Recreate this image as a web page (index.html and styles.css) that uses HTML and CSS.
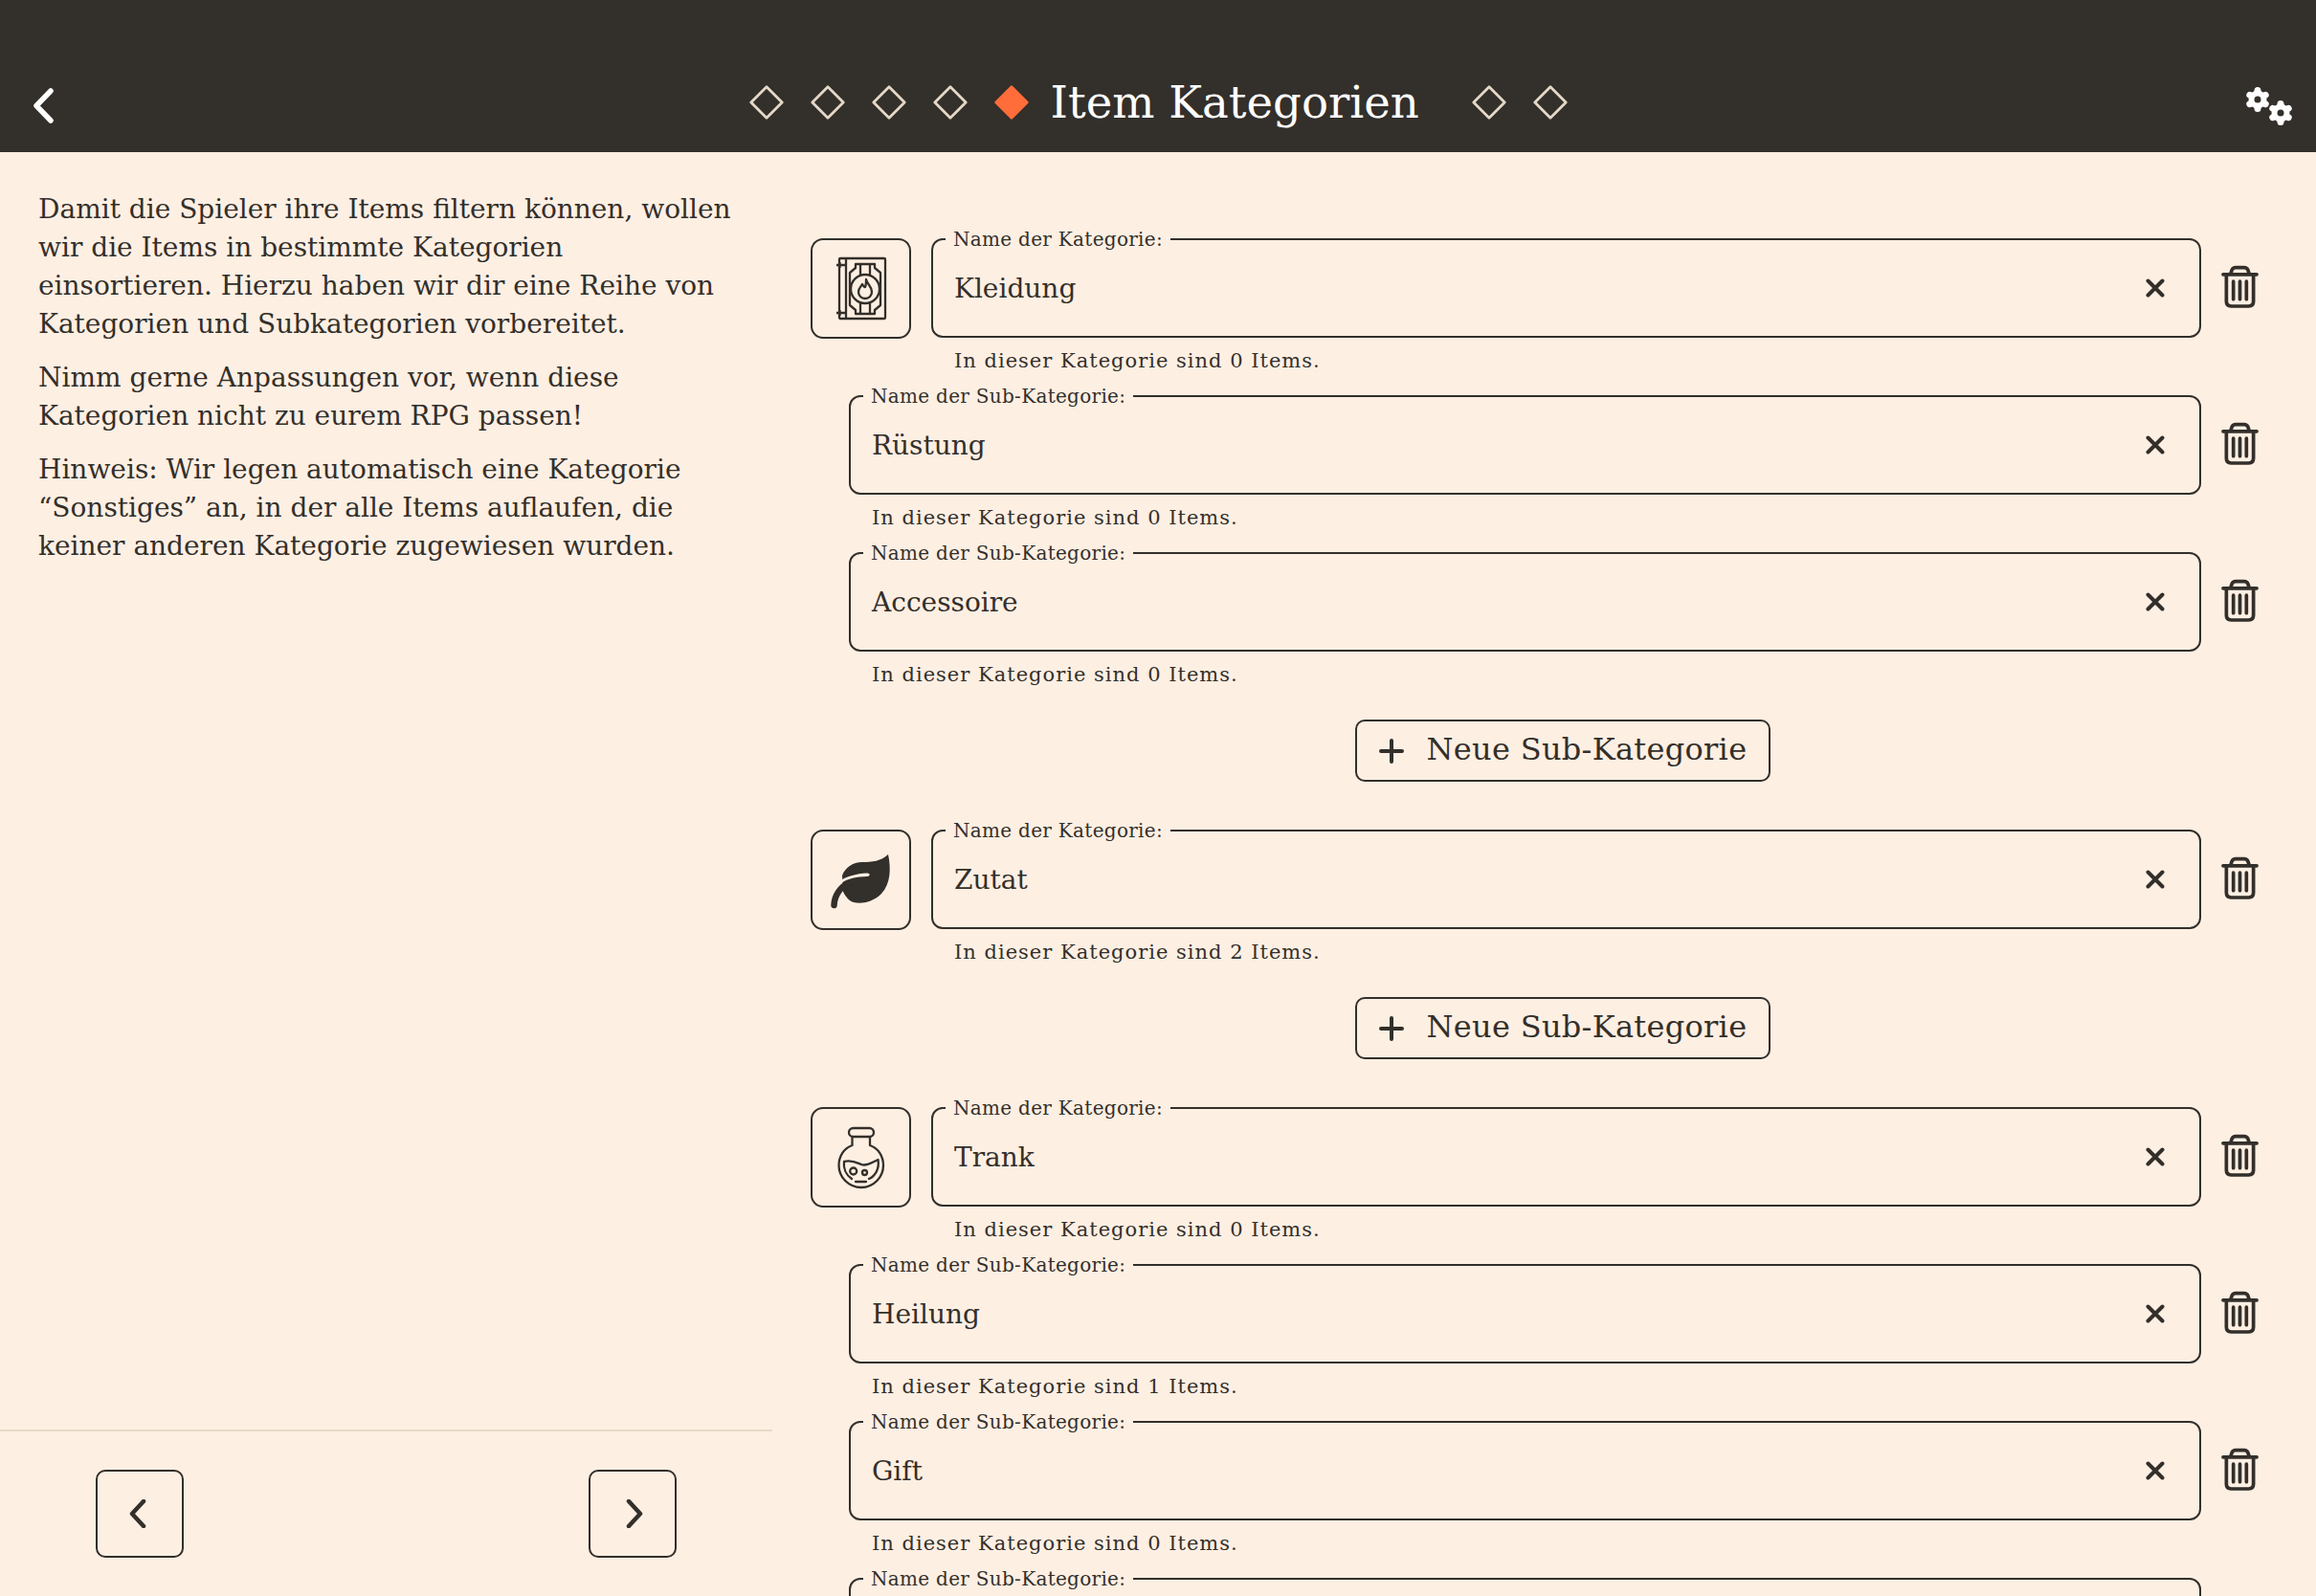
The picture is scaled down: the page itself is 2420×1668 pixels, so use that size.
FILE: index.html
```html
<!DOCTYPE html>
<html lang="de">
<head>
<meta charset="utf-8">
<title>Item Kategorien</title>
<link rel="stylesheet" href="styles.css">
</head>
<body>
<svg class="defs" width="0" height="0" aria-hidden="true">
  <symbol id="trash" viewBox="0 0 40 46"><path d="M2 9.500H38M10 9L11.500 4.500Q12.500 2 15.500 2H24.500Q27.500 2 28.500 4.500L30 9M5.500 9.500V38.500Q5.500 43.500 10.500 43.500H29.500Q34.500 43.500 34.500 38.500V9.500M13 17V36M20 17V36M27 17V36" fill="none" stroke="currentColor" stroke-width="3.800" stroke-linecap="round"/></symbol>
  <symbol id="clear" viewBox="0 0 20 20"><path d="M2.500 2.500L17.500 17.500M17.500 2.500L2.500 17.500" fill="none" stroke="currentColor" stroke-width="4" stroke-linecap="round"/></symbol>
  <symbol id="plus" viewBox="0 0 26 26"><path d="M13 2V24M2 13H24" fill="none" stroke="currentColor" stroke-width="4" stroke-linecap="round"/></symbol>
  <symbol id="diamond" viewBox="0 0 36 36"><path d="M18 1.800L34.200 18L18 34.200L1.800 18Z" fill="none" stroke="currentColor" stroke-width="2.800" stroke-linejoin="round"/></symbol>
</svg>
<div class="app">
  <header class="topbar">
    <button class="back" aria-label="Zurück"><svg width="22" height="37" viewBox="0 0 22 37"><path d="M19 3L4 18.500L19 34" fill="none" stroke="currentColor" stroke-width="5.500" stroke-linecap="round" stroke-linejoin="round"/></svg></button>
    <nav class="steps">
      <svg class="step"><use href="#diamond"/></svg>
      <svg class="step"><use href="#diamond"/></svg>
      <svg class="step"><use href="#diamond"/></svg>
      <svg class="step"><use href="#diamond"/></svg>
      <svg class="step current" viewBox="0 0 36 36"><path d="M18 1.800L34.200 18L18 34.200L1.800 18Z" fill="currentColor" stroke="currentColor" stroke-width="2.800" stroke-linejoin="round"/></svg>
      <h1 class="title">Item Kategorien</h1>
      <svg class="step"><use href="#diamond"/></svg>
      <svg class="step"><use href="#diamond"/></svg>
    </nav>
    <button class="settings" aria-label="Einstellungen"><svg width="52" height="42" viewBox="0 0 52 42"><g fill="#fff" stroke="#fff" stroke-linecap="round"><circle cx="14" cy="14" r="9.500" stroke="none"/><path d="M14 4.500V23.500M5.800 9.300L22.200 18.700M5.800 18.700L22.200 9.300" stroke-width="7"/><circle cx="38" cy="28" r="9.500" stroke="none"/><path d="M38 18.500V37.500M29.800 23.300L46.200 32.700M29.800 32.700L46.200 23.300" stroke-width="7"/></g><circle cx="14" cy="14" r="3.500" fill="#332f2a"/><circle cx="38" cy="28" r="3.500" fill="#332f2a"/></svg></button>
  </header>
  <main class="content">
    <aside class="intro">
      <div class="intro-text">
        <p>Damit die Spieler ihre Items filtern können, wollen<br>wir die Items in bestimmte Kategorien<br>einsortieren. Hierzu haben wir dir eine Reihe von<br>Kategorien und Subkategorien vorbereitet.</p>
        <p>Nimm gerne Anpassungen vor, wenn diese<br>Kategorien nicht zu eurem RPG passen!</p>
        <p>Hinweis: Wir legen automatisch eine Kategorie<br>“Sonstiges” an, in der alle Items auflaufen, die<br>keiner anderen Kategorie zugewiesen wurden.</p>
      </div>
      <div class="pager">
        <button class="page-btn" aria-label="Zurück"><svg class="prev" width="18" height="30" viewBox="0 0 18 30"><path d="M15 2L3 15L15 28" fill="none" stroke="currentColor" stroke-width="4.500" stroke-linecap="round" stroke-linejoin="round"/></svg></button>
        <button class="page-btn" aria-label="Weiter"><svg class="next" width="18" height="30" viewBox="0 0 18 30"><path d="M3 2L15 15L3 28" fill="none" stroke="currentColor" stroke-width="4.500" stroke-linecap="round" stroke-linejoin="round"/></svg></button>
      </div>
    </aside>
    <section class="categories">

      <div class="row">
        <button class="icon-box" aria-label="Icon"><svg width="105" height="105" viewBox="0 0 105 105" fill="none" stroke="currentColor" stroke-width="2.300" stroke-linejoin="round"><rect x="30" y="21" width="48" height="63" rx="1"/><path d="M37 21V84M27 28H37M27 78H37M30.500 25V31M30.500 75V81"/><path d="M47 27H67V31L73 36V70L67 75V79H47V75L41 70V36L47 31Z"/><path d="M52 27V38M62 27V38M52 68V79M62 68V79"/><circle cx="57" cy="53" r="15"/><path d="M58 43C59 48 64 50 64 56C64 60 61 63 57 63C53 63 50 60 50 56C50 52 53 50 54 48C55 50 56 51 57 51C58 49 58 46 58 43Z"/></svg></button>
        <fieldset class="field"><legend>Name der Kategorie:</legend><div class="value">Kleidung</div><svg class="clear"><use href="#clear"/></svg></fieldset>
        <svg class="trash"><use href="#trash"/></svg>
        <p class="hint">In dieser Kategorie sind 0 Items.</p>
      </div>
      <div class="row sub">
        <fieldset class="field"><legend>Name der Sub-Kategorie:</legend><div class="value">Rüstung</div><svg class="clear"><use href="#clear"/></svg></fieldset>
        <svg class="trash"><use href="#trash"/></svg>
        <p class="hint">In dieser Kategorie sind 0 Items.</p>
      </div>
      <div class="row sub">
        <fieldset class="field"><legend>Name der Sub-Kategorie:</legend><div class="value">Accessoire</div><svg class="clear"><use href="#clear"/></svg></fieldset>
        <svg class="trash"><use href="#trash"/></svg>
        <p class="hint">In dieser Kategorie sind 0 Items.</p>
      </div>
      <div class="add-wrap"><button class="add"><svg class="plus"><use href="#plus"/></svg>Neue Sub-Kategorie</button></div>

      <div class="row">
        <button class="icon-box" aria-label="Icon"><svg width="105" height="105" viewBox="0 0 105 105"><path fill="currentColor" d="M81 26C84 40 84 56 74 67C65 76 53 78 45 76C41 75 37 71 34 65L33 48C36 40 44 34 54 34C64 34 74 33 81 26Z"/><path d="M24.500 79C25 68 31 60 42 54" fill="none" stroke="currentColor" stroke-width="6.500" stroke-linecap="round"/><path class="slit" d="M29 55C36 49 48 46 59 45.500C62.500 45.500 62.500 49 59 49C48 49.500 39 51 32 56Z"/></svg></button>
        <fieldset class="field"><legend>Name der Kategorie:</legend><div class="value">Zutat</div><svg class="clear"><use href="#clear"/></svg></fieldset>
        <svg class="trash"><use href="#trash"/></svg>
        <p class="hint">In dieser Kategorie sind 2 Items.</p>
      </div>
      <div class="add-wrap"><button class="add"><svg class="plus"><use href="#plus"/></svg>Neue Sub-Kategorie</button></div>

      <div class="row">
        <button class="icon-box" aria-label="Icon"><svg width="105" height="105" viewBox="0 0 105 105" fill="none" stroke="currentColor" stroke-width="2.300" stroke-linecap="round" stroke-linejoin="round"><rect x="40" y="22" width="26" height="9" rx="4.500"/><path d="M43.500 31V40C35 43 29.500 51 29.500 61C29.500 73 39.500 84 53 84C66 84 76 73 76 61C76 51 70.500 43 62 40V31"/><path d="M35 57C43 55 48 58 53 60C58 62 64 58 70.500 55C72 64 68 72 61 75M35 57C34 64 37 71 43 75M47 78H58"/><circle cx="44.700" cy="67" r="3.500"/><circle cx="56.500" cy="68.500" r="2.500"/></svg></button>
        <fieldset class="field"><legend>Name der Kategorie:</legend><div class="value">Trank</div><svg class="clear"><use href="#clear"/></svg></fieldset>
        <svg class="trash"><use href="#trash"/></svg>
        <p class="hint">In dieser Kategorie sind 0 Items.</p>
      </div>
      <div class="row sub">
        <fieldset class="field"><legend>Name der Sub-Kategorie:</legend><div class="value">Heilung</div><svg class="clear"><use href="#clear"/></svg></fieldset>
        <svg class="trash"><use href="#trash"/></svg>
        <p class="hint">In dieser Kategorie sind 1 Items.</p>
      </div>
      <div class="row sub">
        <fieldset class="field"><legend>Name der Sub-Kategorie:</legend><div class="value">Gift</div><svg class="clear"><use href="#clear"/></svg></fieldset>
        <svg class="trash"><use href="#trash"/></svg>
        <p class="hint">In dieser Kategorie sind 0 Items.</p>
      </div>
      <div class="row sub">
        <fieldset class="field"><legend>Name der Sub-Kategorie:</legend><div class="value"></div></fieldset>
      </div>
    </section>
  </main>
</div>
</body>
</html>
```

FILE: styles.css
```css
* { box-sizing: border-box; }
html, body { margin: 0; height: 100%; overflow: hidden; }
body {
  background: #feefe3;
  color: #332f2a;
  font-family: "DejaVu Serif", serif;
}
.defs { position: absolute; }
button { font: inherit; color: inherit; background: none; border: 0; padding: 0; }
.app { height: 1668px; display: flex; flex-direction: column; }

.topbar {
  flex: 0 0 159px;
  background: #332f2a;
  color: #fff;
  display: grid;
  grid-template-columns: 1fr auto 1fr;
  align-items: start;
  padding-top: 88px;
}
.back { justify-self: start; margin: 4px 0 0 34px; display: flex; }
.settings { justify-self: end; margin: 2px 23px 0 0; display: flex; }
.steps { display: flex; align-items: center; gap: 28px; height: 38px; }
.step { width: 36px; height: 36px; color: #e5d8c8; }
.step.current { color: #ff6d3b; }
.title { margin: 0 0 0 -5px; width: 412px; font-size: 46.6px; line-height: 38px; font-weight: 400; color: #fff; white-space: nowrap; }

.content { flex: 1; display: flex; min-height: 0; }
.intro { flex: 0 0 807px; display: flex; flex-direction: column; }
.intro-text { flex: 1; padding: 40px 20px 0 40px; font-size: 28px; line-height: 40px; }
.intro-text p { margin: 0 0 16px; }
.pager {
  flex: 0 0 174px;
  border-top: 2px solid #e8dac8;
  display: flex;
  justify-content: space-between;
  padding: 40px 100px 0 100px;
}
.page-btn {
  width: 92px; height: 92px;
  border: 2px solid #332f2a;
  border-radius: 10px;
  display: flex; align-items: center; justify-content: center;
}
.prev { margin-right: 4px; }
.next { margin-left: 4px; }

.categories { flex: 1; min-width: 0; overflow: hidden; padding: 77px 60px 0 40px; }
.row {
  display: grid;
  grid-template-columns: 105px 1fr 39px;
  grid-template-rows: 118px 46px;
  column-gap: 21px;
}
.row.sub { grid-template-columns: 1fr 39px; margin-left: 40px; }
.icon-box {
  width: 105px; height: 105px;
  margin-top: 13px;
  border: 2px solid #332f2a;
  border-radius: 13px;
  display: flex; align-items: center; justify-content: center;
}
.icon-box svg { flex: none; margin: -2px; }
.slit { fill: #feefe3; }
.field {
  margin: 0; padding: 0 20px 11px 22px;
  min-width: 0;
  border: 2px solid #332f2a;
  border-radius: 12px;
  display: flex; align-items: center;
  height: 117px;
}
.field legend {
  margin-left: -9px; padding: 0 8px;
  font-size: 20px; line-height: 28px;
  letter-spacing: .3px;
}
.value { flex: 1; font-size: 28px; line-height: 40px; }
.clear { width: 20px; height: 20px; margin: 0 16px 3px 0; }
.trash { width: 39px; height: 46px; margin-top: 41px; }
.hint { grid-column: -3 / -2; margin: 0; padding: 9px 0 0 24px; font-size: 21px; line-height: 28px; letter-spacing: 1px; }
.add-wrap { display: flex; justify-content: center; padding: 24px 0 37px 58px; height: 126px; }
.add {
  height: 65px; width: 434px;
  border: 2px solid #332f2a;
  border-radius: 10px;
  font-size: 32px;
  letter-spacing: .3px;
  display: flex; align-items: center; gap: 24px;
  padding: 0 0 3px 23px;
}
.plus { width: 26px; height: 26px; flex: none; margin-top: 3px; }
```
